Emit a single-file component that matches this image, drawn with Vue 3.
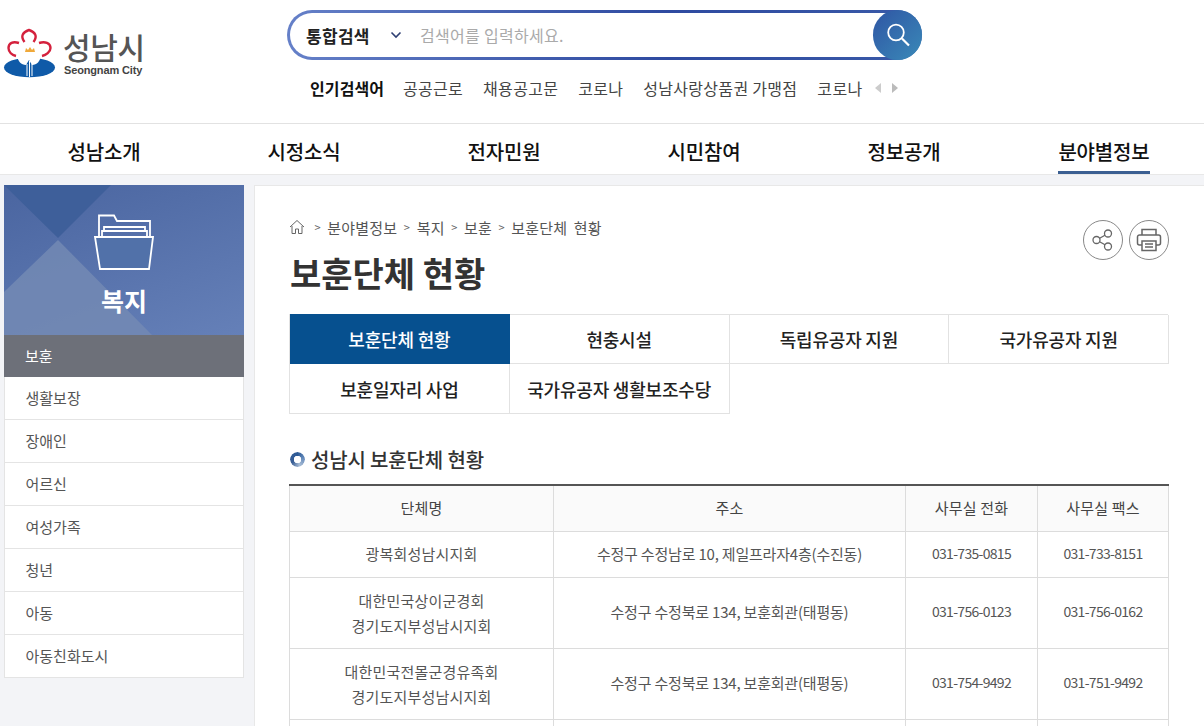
<script setup>
const tabs = ['보훈단체 현황', '현충시설', '독립유공자 지원', '국가유공자 지원', '보훈일자리 사업', '국가유공자 생활보조수당']
const nav = ['성남소개', '시정소식', '전자민원', '시민참여', '정보공개', '분야별정보']
const side = ['생활보장', '장애인', '어르신', '여성가족', '청년', '아동', '아동친화도시']
const hot = ['공공근로', '채용공고문', '코로나', '성남사랑상품권 가맹점', '코로나']
const crumbs = ['분야별정보', '복지', '보훈', '보훈단체 현황']
const rows = [
  { name: ['광복회성남시지회'], addr: '수정구 수정남로 10, 제일프라자4층(수진동)', tel: '031-735-0815', fax: '031-733-8151' },
  { name: ['대한민국상이군경회', '경기도지부성남시지회'], addr: '수정구 수정북로 134, 보훈회관(태평동)', tel: '031-756-0123', fax: '031-756-0162' },
  { name: ['대한민국전몰군경유족회', '경기도지부성남시지회'], addr: '수정구 수정북로 134, 보훈회관(태평동)', tel: '031-754-9492', fax: '031-751-9492' }
]
</script>

<template>
  <div class="page">
    <header class="top">
      <div class="logo">
        <svg class="mark" width="54" height="52" viewBox="3 28 54 52">
          <ellipse cx="29.500" cy="67.500" rx="25.500" ry="9.800" fill="#0f5aa8" />
          <path d="M29 30C23 33 20 37 24 43 18 41 9 41 8 47 7 53 12 56 17 56 18 61 21 65 26 65L29 60 32 65C37 65 40 61 41 56 46 56 52 53 51 47 50 41 41 41 34 43 38 37 35 33 29 30Z" fill="#fff" />
          <path d="M24.500 42C20 36 23 32 29 30 35 32 38 36 33.500 42M19 43C13 41 8.500 43 8.500 48 8.500 52 12 55 16 56M39 43C45 41 50.500 43 50.500 48 50.500 52 46 55 42 56" fill="none" stroke="#d4213d" stroke-width="2.400" />
          <path d="M25 52l1-4 2 2 2-3 2 3 2-2 1 4z" fill="#f0a93a" />
          <path d="M27 64v12M29.500 61v16M32 64v12" stroke="#fff" stroke-width="1" />
        </svg>
        <div class="logo-words">
          <span class="logo-ko">성남시</span>
          <span class="logo-en">Seongnam City</span>
        </div>
      </div>
      <div class="search-col">
        <div class="search">
          <div class="search-inner">
            <span class="scope">통합검색</span>
            <svg class="chev" width="12" height="8" viewBox="0 0 12 8"><path d="M1.500 1.500 6 6l4.500-4.500" fill="none" stroke="#2e3f73" stroke-width="1.600" /></svg>
            <span class="placeholder">검색어를 입력하세요.</span>
          </div>
          <div class="search-btn">
            <svg width="26" height="26" viewBox="0 0 26 26"><circle cx="11" cy="10.500" r="7.800" fill="none" stroke="#fff" stroke-width="1.800" /><path d="M17 16.500l7 7" stroke="#fff" stroke-width="2.200" /></svg>
          </div>
        </div>
        <div class="hot">
          <strong>인기검색어</strong>
          <span v-for="(h, i) in hot" :key="i">{{ h }}</span>
          <div class="arrows"><i class="arrow left"></i><i class="arrow right"></i></div>
        </div>
      </div>
    </header>

    <nav class="gnb">
      <a v-for="(n, i) in nav" :key="n" :class="{ on: i === 5 }">{{ n }}</a>
    </nav>

    <div class="body">
      <aside class="side">
        <div class="side-head">
          <svg class="tri" width="240" height="150" viewBox="0 0 240 150">
            <path d="M0 0H107L54 53z" fill="#3e5f9a" />
            <path d="M0 107 54 55 148 150H0z" fill="#7389b4" opacity=".85" />
          </svg>
          <svg class="folder" width="60" height="56" viewBox="0 0 60 56">
            <path d="M5 22V1.500H20L23 7H56V22" fill="none" stroke="#fff" stroke-width="1.800" />
            <path d="M8 23V17H53V23M10 17V13H51V17" fill="none" stroke="#fff" stroke-width="1.800" />
            <path d="M1 23H59L55 55H6Z" fill="#5171a9" stroke="#fff" stroke-width="1.800" />
          </svg>
          <div class="side-title">복지</div>
        </div>
        <div class="side-active">보훈</div>
        <ul class="side-list">
          <li v-for="s in side" :key="s">{{ s }}</li>
        </ul>
      </aside>

      <main class="main">
        <div class="crumb-row">
          <div class="crumbs">
            <svg width="16" height="16" viewBox="0 0 16 16"><path d="M1 8l7-6.500L15 8M3 7v7.500h3.500V10h3v4.500H13V7" fill="none" stroke="#666" stroke-width="1" /></svg>
            <template v-for="c in crumbs" :key="c"><span class="gt">&gt;</span><span>{{ c }}</span></template>
          </div>
          <div class="tools">
            <span class="tool">
              <svg width="26" height="26" viewBox="0 0 26 26"><g fill="none" stroke="#666" stroke-width="1.300"><circle cx="18" cy="6.500" r="3.500" /><circle cx="18" cy="19.500" r="3.500" /><circle cx="6.500" cy="13" r="3.500" /><path d="M9.600 11.300l5.400-3.100M9.600 14.700l5.400 3.100" /></g></svg>
            </span>
            <span class="tool">
              <svg width="26" height="26" viewBox="0 0 26 26"><g fill="none" stroke="#666" stroke-width="1.500"><path d="M6 8V2.500h14V8" /><path d="M6 18H3.500a2 2 0 0 1-2-2v-6a2 2 0 0 1 2-2h19a2 2 0 0 1 2 2v6a2 2 0 0 1-2 2H20" /><path d="M6 14h14v9.500H6zM9 17h8M9 20h8" /></g></svg>
            </span>
          </div>
        </div>
        <h1>보훈단체 현황</h1>

        <div class="tabs">
          <a v-for="(t, i) in tabs" :key="t" :class="{ on: i === 0 }">{{ t }}</a>
        </div>

        <h2><i class="ring"></i>성남시 보훈단체 현황</h2>

        <table>
          <colgroup><col class="c1" /><col class="c2" /><col class="c3" /><col class="c4" /></colgroup>
          <thead>
            <tr><th>단체명</th><th>주소</th><th>사무실 전화</th><th>사무실 팩스</th></tr>
          </thead>
          <tbody>
            <tr v-for="r in rows" :key="r.name[0]">
              <td :class="['name', { single: r.name.length === 1 }]"><div v-for="n in r.name" :key="n">{{ n }}</div></td>
              <td class="addr">{{ r.addr }}</td>
              <td class="num">{{ r.tel }}</td>
              <td class="num">{{ r.fax }}</td>
            </tr>
            <tr><td></td><td></td><td></td><td></td></tr>
          </tbody>
        </table>
      </main>
    </div>
  </div>
</template>

<style>
html, body { margin: 0; height: 726px; overflow: hidden; background: #f3f4f7; }
</style>

<style scoped>
.page {
  width: 1204px;
  height: 726px;
  overflow: hidden;
  font-family: "Noto Sans CJK KR", "Noto Sans", sans-serif;
  color: #333;
  background: #f3f4f7;
}
.top {
  display: flex;
  height: 123px;
  background: #fff;
  border-bottom: 1px solid #e2e2e2;
}
.logo {
  width: 287px;
  padding: 28px 0 0 3px;
  display: flex;
  gap: 6px;
  box-sizing: border-box;
}
.mark { flex: none; }
.logo-words { display: flex; flex-direction: column; padding-top: 2px; }
.logo-ko { font-size: 30px; line-height: 32px; color: #555; font-weight: 500; letter-spacing: -0.300px; }
.logo-en { font-family: "Liberation Sans", sans-serif; font-size: 11px; line-height: 12px; color: #444; font-weight: 700; letter-spacing: -0.150px; margin: 2px 0 0 1px; white-space: nowrap; }
.search-col { display: flex; flex-direction: column; padding-top: 10px; }
.search {
  width: 635px;
  height: 50px;
  border-radius: 25px;
  padding: 3px 0 3px 3px;
  box-sizing: border-box;
  background: linear-gradient(90deg, #6580c8, #2e4aa0 60%, #3a5aa8);
  position: relative;
}
.search-inner {
  height: 44px;
  border-radius: 22px;
  background: #fff;
  display: flex;
  align-items: center;
  padding-left: 16px;
  margin-right: 10px;
}
.scope { font-size: 17px; font-weight: 700; color: #222; letter-spacing: 0.300px; width: 69px; white-space: nowrap; }
.chev { margin-left: 15px; }
.placeholder { margin-left: 18px; font-size: 16px; color: #aaa; letter-spacing: 0.300px; }
.search-btn {
  position: absolute;
  right: 0;
  top: 0;
  width: 49px;
  height: 50px;
  border-radius: 25px;
  background: linear-gradient(135deg, #2f55a4, #3a8ab8);
  display: flex;
  align-items: center;
  justify-content: center;
}
.hot {
  display: flex;
  align-items: center;
  margin-top: 16px;
  padding-left: 23px;
  height: 24px;
  font-size: 16px;
  color: #444;
  white-space: nowrap;
  letter-spacing: 0.300px;
}
.hot strong { color: #111; font-weight: 700; width: 93px; letter-spacing: 0.100px; }
.hot span { margin-right: 20px; }
.arrows { display: flex; gap: 11px; margin-left: -7px; }
.arrow { width: 0; height: 0; border-top: 5px solid transparent; border-bottom: 5px solid transparent; }
.arrow.left { border-right: 6px solid #ccc; }
.arrow.right { border-left: 6px solid #bbb; }
.gnb {
  height: 50px;
  background: #fff;
  border-bottom: 1px solid #e8e8e8;
  display: grid;
  grid-template-columns: repeat(6, 200px);
  padding-left: 4px;
}
.gnb a {
  justify-self: center;
  font-size: 20px;
  font-weight: 500;
  color: #111;
  line-height: 56px;
  height: 50px;
  letter-spacing: -0.150px;
  box-sizing: border-box;
  white-space: nowrap;
}
.gnb a.on { border-bottom: 3px solid #3b5f92; }
.body { display: flex; padding: 10px 0 0 4px; gap: 10px; }
.side { width: 240px; flex: none; }
.side-head {
  position: relative;
  height: 150px;
  background: linear-gradient(160deg, #4a65a0, #6580b8);
  overflow: hidden;
  display: flex;
  flex-direction: column;
  align-items: center;
}
.tri { position: absolute; left: 0; top: 0; }
.folder { position: relative; margin-top: 29px; }
.side-title { position: relative; font-size: 25px; font-weight: 700; color: #fff; line-height: 32px; margin-top: 14px; }
.side-active {
  height: 42px;
  line-height: 42px;
  background: #6d7079;
  color: #fff;
  font-size: 15px;
  padding-left: 21px;
}
.side-list {
  list-style: none;
  margin: 0;
  padding: 0;
  background: #fff;
  border: 1px solid #e4e4e4;
  border-top: 0;
}
.side-list li {
  height: 42px;
  line-height: 42px;
  padding-left: 20.500px;
  font-size: 15px;
  color: #555;
  border-bottom: 1px solid #e4e4e4;
}
.side-list li:last-child { border-bottom: 0; }
.main {
  flex: 1;
  background: #fff;
  border: 1px solid #e8e8e8;
  border-right: 0;
  height: 600px;
  padding: 30px 36px 0 34px;
  box-sizing: border-box;
}
.crumb-row { display: flex; justify-content: space-between; height: 24px; }
.crumbs { display: flex; align-items: center; gap: 5px; font-size: 15px; color: #555; height: 22px; letter-spacing: 0.200px; word-spacing: 3px; }
.crumbs svg { margin-right: 3px; }
.gt { font-size: 11px; color: #666; margin: 0 1.500px; }
.tools { display: flex; gap: 6px; margin-top: 4px; }
.tool {
  width: 38px;
  height: 38px;
  border: 1px solid #888;
  border-radius: 50%;
  display: flex;
  align-items: center;
  justify-content: center;
  background: #fff;
}
h1 {
  margin: 9px 0 0 1px;
  font-size: 34px;
  line-height: 48px;
  font-weight: 700;
  color: #333;
}
.tabs {
  display: grid;
  grid-template-columns: repeat(4, 219.750px);
  grid-template-rows: 49px 50px;
  width: 879px;
  margin-top: 17px;
  border-top: 1px solid #e2e2e2;
  border-left: 1px solid #e2e2e2;
  box-sizing: border-box;
}
.tabs a {
  display: flex;
  align-items: center;
  justify-content: center;
  font-size: 18px;
  font-weight: 500;
  color: #222;
  border-right: 1px solid #e2e2e2;
  border-bottom: 1px solid #e2e2e2;
  letter-spacing: -0.200px;
  white-space: nowrap;
}
.tabs a.on { background: #06508f; color: #fff; margin-top: -1px; border-color: #06508f; }
h2 {
  display: flex;
  align-items: center;
  margin: 31px 0 0 1px;
  height: 28px;
  font-size: 20px;
  font-weight: 500;
  color: #333;
  letter-spacing: -0.150px;
}
.ring {
  width: 15px;
  height: 15px;
  border-radius: 50%;
  background: conic-gradient(#2d5a96 0deg, #5f86b8 70deg, #a9bdd6 160deg, #3a5f96 240deg, #2d5a96 360deg);
  -webkit-mask: radial-gradient(circle, transparent 3.500px, #000 4px);
  mask: radial-gradient(circle, transparent 3.500px, #000 4px);
  margin-right: 6px;
}
table {
  width: 879px;
  margin-top: 11px;
  border-collapse: collapse;
  table-layout: fixed;
  border-top: 2px solid #555;
  font-size: 15px;
  color: #555;
}
.c1 { width: 264px; }
.c2 { width: 352px; }
.c3 { width: 132px; }
.c4 { width: 131px; }
th, td { border: 1px solid #dcdcdc; text-align: center; padding: 0; }
th { height: 46px; font-weight: 400; background: #fafafa; color: #444; font-size: 15px; letter-spacing: 0.200px; padding-bottom: 2px; box-sizing: border-box; }
td { height: 45px; line-height: 25px; padding: 10px 0; box-sizing: border-box; }
.name { letter-spacing: 0.200px; }
.addr { letter-spacing: -0.200px; }
.num { font-size: 14px; letter-spacing: -0.700px; }
.addr, .num, .single { padding: 9px 0 11px; }
</style>
